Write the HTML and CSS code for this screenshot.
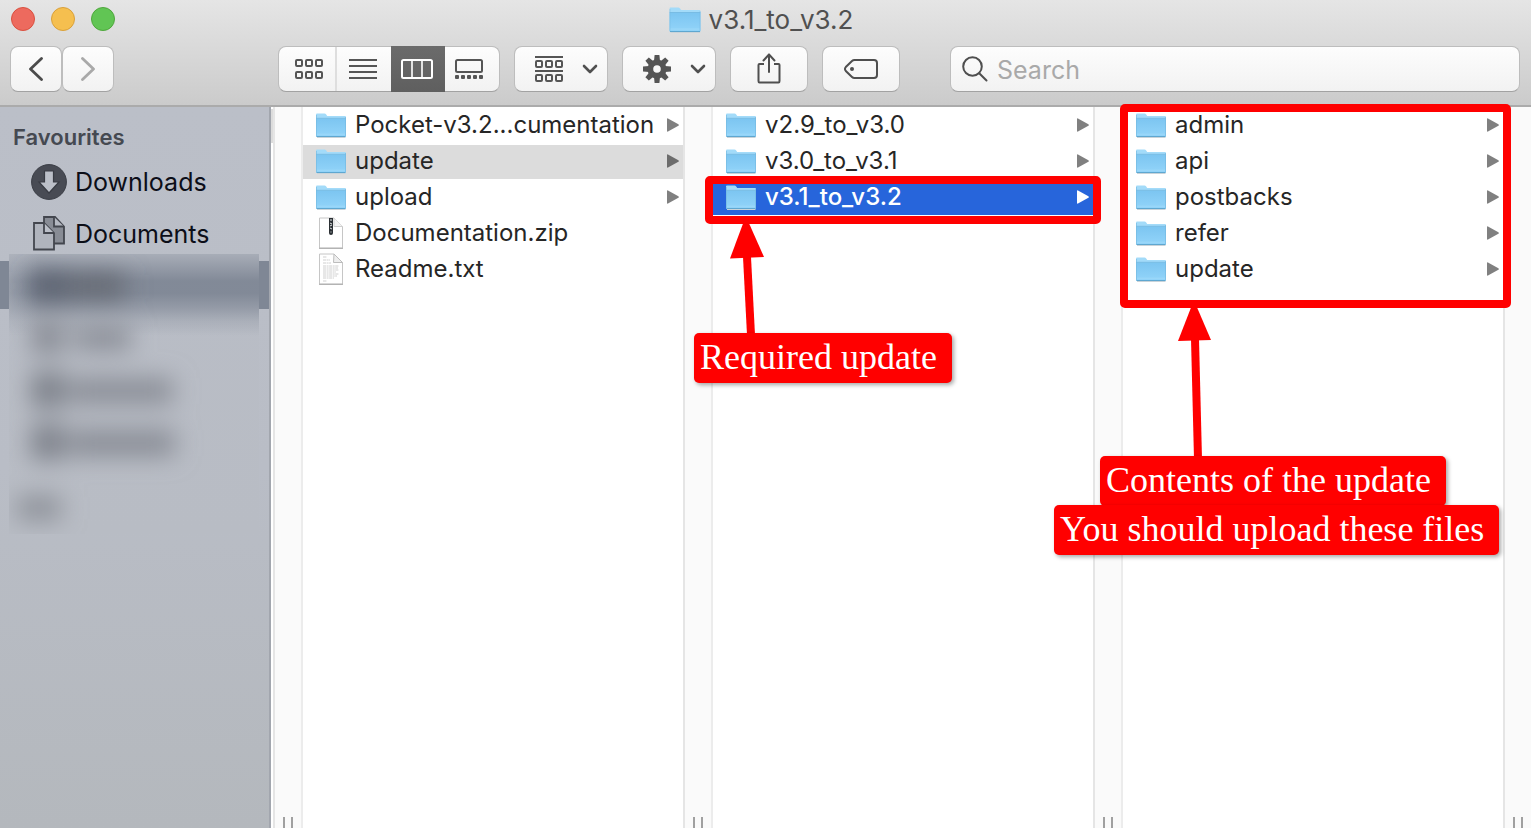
FILE: index.html
```html
<!DOCTYPE html>
<html lang="en">
<head>
<meta charset="utf-8">
<title>v3.1_to_v3.2</title>
<link rel="stylesheet" href="styles.css">
</head>
<body>
<svg class="sprite" aria-hidden="true">
  <defs>
    <linearGradient id="folder-fill" x1="0" y1="0" x2="0" y2="1"><stop offset="0" stop-color="#7cc5f1"/><stop offset="1" stop-color="#92d4f9"/></linearGradient>
    <symbol id="folder" viewBox="0 0 30 25">
      <path d="M1 24.5h28.500" stroke="#c9d3d9" stroke-width="1"/>
      <path d="M0 1.500Q0 .5 1 .5H8.500Q9.500 .5 10.200 1.500L11.200 3H29Q30 3 30 4V23Q30 24 29 24H1Q0 24 0 23Z" fill="#a3dbf9"/>
      <path d="M0 5.500H30V22.500Q30 23.500 29 23.500H1Q0 23.500 0 22.500Z" fill="url(#folder-fill)"/>
      <path d="M0 5.300H30" stroke="#72b7e0" stroke-width=".8"/>
      <path d="M.5 23.500H29.500" stroke="#5fa7d0" stroke-width="1"/>
      <path d="M.4 2V23M29.600 4V23" stroke="#74b9e0" stroke-width=".7"/>
      <path d="M1 21.200H29" stroke="#a9defb" stroke-width=".6"/>
    </symbol>
    <symbol id="arrow" viewBox="0 0 12 14"><path d="M0 1Q0 0 1 .4L11.400 6.200Q12.400 7 11.400 7.800L1 13.600Q0 14 0 13Z" fill="currentColor"/></symbol>
    <symbol id="chevron" viewBox="0 0 16 10"><path d="M2 2l6 6 6-6" fill="none" stroke="currentColor" stroke-width="2.600" stroke-linecap="round" stroke-linejoin="round"/></symbol>
  </defs>
</svg>

<div class="window">
  <header class="titlebar">
    <div class="title-row">
      <div class="lights">
        <button class="light close" aria-label="Close"></button>
        <button class="light minimise" aria-label="Minimise"></button>
        <button class="light maximise" aria-label="Maximise"></button>
      </div>
      <h1 class="title"><svg width="32" height="26" viewBox="0 0 30 25" aria-hidden="true"><use href="#folder"/></svg>v3.1_to_v3.2</h1>
    </div>
    <div class="toolbar">
      <div class="nav">
        <button class="tool nav-button" aria-label="Back"><svg width="14" height="24" viewBox="0 0 14 24"><path d="M12.500 1.500L1.500 12l11 10.500" fill="none" stroke="#4b4b4b" stroke-width="2.800" stroke-linecap="round" stroke-linejoin="round"/></svg></button>
        <button class="tool nav-button" aria-label="Forward"><svg width="14" height="24" viewBox="0 0 14 24"><path d="M1.500 1.500L12.500 12l-11 10.500" fill="none" stroke="#a9a9a9" stroke-width="2.800" stroke-linecap="round" stroke-linejoin="round"/></svg></button>
      </div>
      <div class="tool views" role="group" aria-label="View">
        <button class="view" aria-label="Icons"><svg width="28" height="20" viewBox="0 0 28 20" fill="none" stroke="#555" stroke-width="2"><rect x="1" y="1" width="6" height="6" rx="1"/><rect x="11" y="1" width="6" height="6" rx="1"/><rect x="21" y="1" width="6" height="6" rx="1"/><rect x="1" y="13" width="6" height="6" rx="1"/><rect x="11" y="13" width="6" height="6" rx="1"/><rect x="21" y="13" width="6" height="6" rx="1"/></svg></button>
        <button class="view" aria-label="List"><svg width="28" height="20" viewBox="0 0 28 20" stroke="#555" stroke-width="2"><path d="M0 1H28M0 7H28M0 13H28M0 19H28"/></svg></button>
        <button class="view active" aria-label="Columns" aria-pressed="true"><svg width="32" height="20" viewBox="0 0 32 20" fill="none" stroke="#fff" stroke-width="2"><rect x="1" y="1" width="30" height="18" rx="1.500"/><path d="M11 1V19M21 1V19" stroke-width="1.600"/></svg></button>
        <button class="view" aria-label="Gallery"><svg width="28" height="20" viewBox="0 0 28 20"><rect x="1" y="1" width="26" height="12" rx="1.500" fill="none" stroke="#555" stroke-width="2"/><g fill="#555"><rect y="16" width="4" height="4" rx="1"/><rect x="6" y="16" width="4" height="4" rx="1"/><rect x="12" y="16" width="4" height="4" rx="1"/><rect x="18" y="16" width="4" height="4" rx="1"/><rect x="24" y="16" width="4" height="4" rx="1"/></g></svg></button>
      </div>
      <button class="tool menu" aria-label="Arrange"><svg width="28" height="26" viewBox="0 0 28 26" fill="none" stroke="#555" stroke-width="2"><path d="M0 1H28M0 15H28"/><rect x="1" y="5" width="6" height="6" rx="1"/><rect x="11" y="5" width="6" height="6" rx="1"/><rect x="21" y="5" width="6" height="6" rx="1"/><rect x="1" y="19" width="6" height="6" rx="1"/><rect x="11" y="19" width="6" height="6" rx="1"/><rect x="21" y="19" width="6" height="6" rx="1"/></svg><svg width="16" height="10"><use href="#chevron"/></svg></button>
      <button class="tool menu" aria-label="Actions"><svg width="28" height="28" viewBox="-14 -14 28 28"><g fill="#555"><g id="teeth"><path d="M-2.400-14H2.400L3-8H-3Z"/><path d="M-2.400 14H2.400L3 8H-3Z"/><path d="M-14-2.400V2.400L-8 3V-3Z"/><path d="M14-2.400V2.400L8 3V-3Z"/></g><use href="#teeth" transform="rotate(45)"/><path fill-rule="evenodd" d="M0-9.500A9.500 9.500 0 1 1 0 9.500A9.500 9.500 0 1 1 0-9.500M0-3.800A3.800 3.800 0 1 0 0 3.800A3.800 3.800 0 1 0 0-3.800"/></g></svg><svg width="16" height="10"><use href="#chevron"/></svg></button>
      <button class="tool single" aria-label="Share"><svg width="24" height="32" viewBox="0 0 24 32" fill="none" stroke="#4f4f4f" stroke-width="2" stroke-linecap="round" stroke-linejoin="round"><path d="M7 11H2.500Q1.500 11 1.500 12V28Q1.500 29.500 2.500 29.500H21.500Q22.500 29.500 22.500 28V12Q22.500 11 21.500 11H17" stroke-linecap="butt"/><path d="M12 19V1.500M6.500 7.500L12 1.500l5.500 6"/></svg></button>
      <button class="tool single" aria-label="Tags"><svg width="34" height="20" viewBox="0 0 34 20"><path d="M10.500 1H30Q33 1 33 4V16Q33 19 30 19H10.500Q9 19 8 18L1.800 12Q.2 10 1.800 8L8 2Q9 1 10.500 1Z" fill="none" stroke="#4f4f4f" stroke-width="2"/><circle cx="8" cy="10" r="2" fill="#4f4f4f"/></svg></button>
      <label class="tool search"><svg width="26" height="26" viewBox="0 0 26 26" fill="none" stroke="#4f4f4f" stroke-width="2" stroke-linecap="round" aria-hidden="true"><circle cx="10.500" cy="10.500" r="9.300"/><path d="M17.200 17.200L24.500 24.500"/></svg><input type="search" placeholder="Search" aria-label="Search"></label>
    </div>
  </header>

  <main class="browser">
    <nav class="sidebar" aria-label="Favourites">
      <h2 class="section">Favourites</h2>
      <a class="place" href="#"><svg width="36" height="36" viewBox="0 0 36 36"><circle cx="18" cy="18" r="17.400" fill="#484b54" stroke="#3a3d45"/><path d="M13.500 7H22.500V18H28L18 29L8 18H13.500Z" fill="#bbbfc8" stroke="#383b43" stroke-width="1.200"/></svg>Downloads</a>
      <a class="place" href="#"><svg width="36" height="36" viewBox="0 0 36 36" stroke="#43464e" stroke-width="1.800" fill="#888c95"><path d="M13 1H24L33 10.500V27.500H13Z"/><path d="M23 1V10.500H33" fill="#b4b8c1"/><path d="M3 7H13L23 17V33.500H3Z" fill="#b0b4bd"/><path d="M13 7V17H23" fill="#bbbfc8"/></svg>Documents</a>
      <div class="place current"></div>
      <div class="redaction">
        <svg width="250" height="280" viewBox="0 0 250 280" preserveAspectRatio="none" aria-hidden="true">
          <defs>
            <filter id="soft" x="-60" y="-60" width="420" height="420" filterUnits="userSpaceOnUse"><feGaussianBlur stdDeviation="12"/></filter>
            <linearGradient id="band" x1="0" y1="0" x2="0" y2="1"><stop offset="0" stop-color="#7f8795" stop-opacity=".3"/><stop offset=".2" stop-color="#7f8795" stop-opacity=".7"/><stop offset=".33" stop-color="#7f8795" stop-opacity=".95"/><stop offset=".48" stop-color="#7f8795" stop-opacity=".95"/><stop offset=".65" stop-color="#7f8795" stop-opacity=".65"/><stop offset=".82" stop-color="#7f8795" stop-opacity=".25"/><stop offset="1" stop-color="#7f8795" stop-opacity="0"/></linearGradient>
            <linearGradient id="edge"><stop offset="0" stop-color="#b9bdc6" stop-opacity=".4"/><stop offset="1" stop-color="#b9bdc6" stop-opacity="0"/></linearGradient>
          </defs>
          <rect width="250" height="82" fill="url(#band)"/>
          <rect width="30" height="80" fill="url(#edge)"/>
          <g filter="url(#soft)">
            <path d="M22 18H58V46H22Z" fill="#5a616e"/><path d="M60 20H116V44H60Z" fill="#636771"/>
            <path d="M22 66H56V100H22Z" fill="#8a8e97"/><path d="M66 72H122V96H66Z" fill="#898d96"/>
            <path d="M22 118H56V154H22Z" fill="#7e828b"/><path d="M60 124H164V150H60Z" fill="#8a8e97"/>
            <path d="M22 170H56V206H22Z" fill="#7f838c"/><path d="M60 176H166V202H60Z" fill="#888c95"/>
            <path d="M8 242H52V266H8Z" fill="#8d9199"/>
          </g>
        </svg>
      </div>
    </nav>

    <div class="gutter first"></div>
    <section class="column">
      <a class="row" href="#"><svg class="icon" width="30" height="25"><use href="#folder"/></svg><span class="name">Pocket-v3.2...cumentation</span><svg width="12" height="14"><use href="#arrow"/></svg></a>
      <a class="row open" href="#"><svg class="icon" width="30" height="25"><use href="#folder"/></svg><span class="name">update</span><svg width="12" height="14"><use href="#arrow"/></svg></a>
      <a class="row" href="#"><svg class="icon" width="30" height="25"><use href="#folder"/></svg><span class="name">upload</span><svg width="12" height="14"><use href="#arrow"/></svg></a>
      <a class="row" href="#"><svg class="icon" width="30" height="32" viewBox="0 0 30 32"><path d="M3.500 1H18L26.500 9.500V31H3.500Z" fill="#fff" stroke="#c6c6c6"/><path d="M3 31.300H27" stroke="#a8a8a8"/><path d="M18 1V9.500H26.500" fill="#f4f4f4" stroke="#cfcfcf"/><path d="M13 1H17V16Q17 18 15 18Q13 18 13 16Z" fill="#2b3034"/><path d="M14 3h2M14 6l2 1M14 9l2-1M14 11l2 1M14.500 15h1" stroke="#e3e6e8" stroke-width="1"/></svg><span class="name">Documentation.zip</span></a>
      <a class="row" href="#"><svg class="icon" width="30" height="32" viewBox="0 0 30 32"><path d="M3.500 1H18L26.500 9.500V31H3.500Z" fill="#fff" stroke="#c6c6c6"/><path d="M3 31.300H27" stroke="#a8a8a8"/><path d="M18 1L17.500 9.500H26.500Z" fill="#eee" stroke="#bdbdbd"/><path d="M7 4H11M7 7H14M7 10H15M7 13H23M7 15H22M7 17H23M7 19H20M7 21H23M7 23H21M7 25H18M7 28H11" stroke="#c9c9c9" stroke-width=".9" stroke-dasharray="3 .6 2 .5"/></svg><span class="name">Readme.txt</span></a>
    </section>

    <div class="gutter"></div>
    <section class="column">
      <a class="row" href="#"><svg class="icon" width="30" height="25"><use href="#folder"/></svg><span class="name">v2.9_to_v3.0</span><svg width="12" height="14"><use href="#arrow"/></svg></a>
      <a class="row" href="#"><svg class="icon" width="30" height="25"><use href="#folder"/></svg><span class="name">v3.0_to_v3.1</span><svg width="12" height="14"><use href="#arrow"/></svg></a>
      <a class="row selected" href="#"><svg class="icon" width="30" height="25"><use href="#folder"/></svg><span class="name">v3.1_to_v3.2</span><svg width="12" height="14"><use href="#arrow"/></svg></a>
      <svg class="pointer pointer-required" width="36" height="114" viewBox="0 0 36 114" fill="#f00"><path d="M14 0H18L34 36L0 37.500Z"/><path d="M13 36L21 36L25 114H17Z"/></svg>
      <div class="notes notes-required"><p class="note">Required update</p></div>
    </section>

    <div class="gutter"></div>
    <section class="column">
      <div class="frame"></div>
      <a class="row" href="#"><svg class="icon" width="30" height="25"><use href="#folder"/></svg><span class="name">admin</span><svg width="12" height="14"><use href="#arrow"/></svg></a>
      <a class="row" href="#"><svg class="icon" width="30" height="25"><use href="#folder"/></svg><span class="name">api</span><svg width="12" height="14"><use href="#arrow"/></svg></a>
      <a class="row" href="#"><svg class="icon" width="30" height="25"><use href="#folder"/></svg><span class="name">postbacks</span><svg width="12" height="14"><use href="#arrow"/></svg></a>
      <a class="row" href="#"><svg class="icon" width="30" height="25"><use href="#folder"/></svg><span class="name">refer</span><svg width="12" height="14"><use href="#arrow"/></svg></a>
      <a class="row" href="#"><svg class="icon" width="30" height="25"><use href="#folder"/></svg><span class="name">update</span><svg width="12" height="14"><use href="#arrow"/></svg></a>
      <svg class="pointer pointer-contents" width="36" height="154" viewBox="0 0 36 154" fill="#f00"><path d="M14 0H18L33 35L0 36Z"/><path d="M13 34H21L24 154H16Z"/></svg>
      <div class="notes notes-contents"><p class="note">Contents of the update</p><p class="note wide">You should upload these files</p></div>
    </section>
    <div class="gutter last"></div>
  </main>
</div>
</body>
</html>
```
FILE: styles.css
```css
*, *::before, *::after { box-sizing: border-box; }

body {
  margin: 0;
  font-family: Inter, "Liberation Sans", sans-serif;
  color: #262626;
  background: #fff;
  overflow: hidden;
}

.sprite { position: absolute; width: 0; height: 0; }
.window { display: flex; flex-direction: column; height: 100vh; }
svg { display: block; flex: none; }
button { font: inherit; border: 0; padding: 0; background: none; }
a { color: inherit; text-decoration: none; }

.titlebar {
  padding: 0 11px 13px 10px;
  background: linear-gradient(#e5e5e5, #cbcbcb);
  border-bottom: 2px solid #ababab;
}
.title-row { display: flex; align-items: center; height: 38px; margin-bottom: 8px; padding-right: 113px; }
.lights { display: flex; gap: 16px; padding-left: 1px; }
.light { width: 24px; height: 24px; border-radius: 50%; border: 1px solid; }
.close { background: #ed6a5e; border-color: #d9503f; }
.minimise { background: #f5bf4f; border-color: #d9a03a; }
.maximise { background: #61c554; border-color: #4fa73c; }
.title {
  flex: 1;
  display: flex;
  justify-content: center;
  align-items: center;
  gap: 8px;
  margin: 0;
  padding-top: 2px;
  font-size: 26px;
  font-weight: 400;
  line-height: 30px;
  color: #505050;
}

.toolbar { display: flex; align-items: center; gap: 14px; }
.tool {
  height: 46px;
  border: 1px solid #bdbdbd;
  border-bottom-color: #a2a2a2;
  border-radius: 8px;
  background: linear-gradient(#fdfdfd, #f2f2f2);
  color: #505050;
}
.nav { display: flex; margin-right: 150px; }
.nav-button { display: flex; align-items: center; justify-content: center; width: 52px; }
.views { display: grid; grid-template-columns: 58px repeat(3, 1fr); width: 222px; }
.view { display: flex; align-items: center; justify-content: center; padding-right: 2px; }
.view:first-child { padding: 0 0 0 4px; border-right: 2px solid #dedede; }
.view:last-child { padding-right: 6px; }
.view.active { margin: -1px 0; background: linear-gradient(#6b6b6b, #5f5f5f); }
.menu { display: flex; align-items: center; justify-content: space-between; width: 94px; padding: 0 9px 0 20px; }
.single { display: flex; align-items: center; justify-content: center; width: 78px; }
.search { flex: 1; display: flex; align-items: center; gap: 9px; margin-left: 36px; padding: 0 11px; }
.search input {
  flex: 1;
  min-width: 0;
  padding: 2px 0 0;
  border: 0;
  outline: 0;
  background: none;
  font: inherit;
  font-size: 25px;
  line-height: 30px;
  color: #333;
}
.search input::placeholder { color: #a9a9a9; opacity: 1; }

.browser { flex: 1; display: flex; min-height: 0; }

.sidebar {
  position: relative;
  flex: 0 0 271px;
  border-right: 2px solid #a2a6ae;
  background: linear-gradient(#bbbfc8, #b9bdc6 50%, #b4b8bd);
}
.section {
  margin: 0;
  padding: 15px 13px 4px;
  font-size: 22px;
  font-weight: 600;
  line-height: 30px;
  color: #454951;
}
.place {
  display: flex;
  align-items: center;
  gap: 8px;
  height: 52px;
  padding-left: 31px;
  font-size: 25px;
  color: #0c0e18;
}
.place.current { height: 48px; margin-top: 1px; background: #7f8795; }
.redaction { position: absolute; top: 147px; left: 9px; right: 10px; background: linear-gradient(#b9bdc6, #b8bcc4); }
.redaction svg { width: 100%; }

.gutter {
  position: relative;
  flex: 0 0 30px;
  border-left: 2px solid #e5e5e5;
  border-right: 2px solid #ececec;
  background: #fafafa;
}
.gutter.first { margin-left: 2px; }
.gutter.first::before {
  content: "";
  position: absolute;
  top: 2px;
  left: -4px;
  width: 2px;
  height: 34px;
  background: #dcdcdc;
}
.gutter.last { flex-basis: 28px; border-right: 0; }
.gutter::after {
  content: "";
  position: absolute;
  left: 8px;
  bottom: 0;
  width: 10px;
  height: 11px;
  border: solid #a0a0a0;
  border-width: 0 2px;
}

.column {
  position: relative;
  flex: 1 1 0;
  min-width: 0;
  display: flex;
  flex-direction: column;
  gap: 2px;
  padding-top: 2px;
}
.row {
  position: relative;
  display: flex;
  align-items: center;
  gap: 9px;
  height: 34px;
  padding: 0 4px 2px 13px;
  font-size: 24px;
  line-height: 30px;
  color: #808080;
}
.name { flex: 1; white-space: nowrap; color: #262626; }
.row.open { background: #dcdcdc; color: #6c6c6c; }
.row.selected { z-index: 1; background: #2765db; color: #fff; }
.row.selected .name { color: #fff; font-weight: 500; }
.row.selected::after {
  content: "";
  position: absolute;
  inset: -5px -8px -9px;
  border: 8px solid #f00;
  border-radius: 5px;
}

.frame {
  position: absolute;
  z-index: 1;
  top: -3px;
  left: -3px;
  right: -8px;
  height: 204px;
  border: 8px solid #f00;
  border-radius: 5px;
}
.pointer { position: absolute; z-index: 1; }
.pointer-required { left: 17px; top: 114px; }
.pointer-contents { left: 55px; top: 198px; }
.notes { position: absolute; z-index: 2; display: flex; flex-direction: column; align-items: flex-start; }
.notes-required { left: -19px; top: 226px; }
.notes-contents { left: -69px; top: 349px; }
.note {
  margin: 0 0 0 46px;
  padding: 0 15px 2px 6px;
  border-radius: 5px;
  background: #f00;
  box-shadow: 2px 2px 4px rgba(0, 0, 0, .35);
  font-family: "Liberation Serif", serif;
  font-size: 36px;
  line-height: 48px;
  white-space: nowrap;
  color: #fff;
}
.notes-required .note, .note.wide { margin-left: 0; }
.note.wide { margin-top: -1px; }
```
